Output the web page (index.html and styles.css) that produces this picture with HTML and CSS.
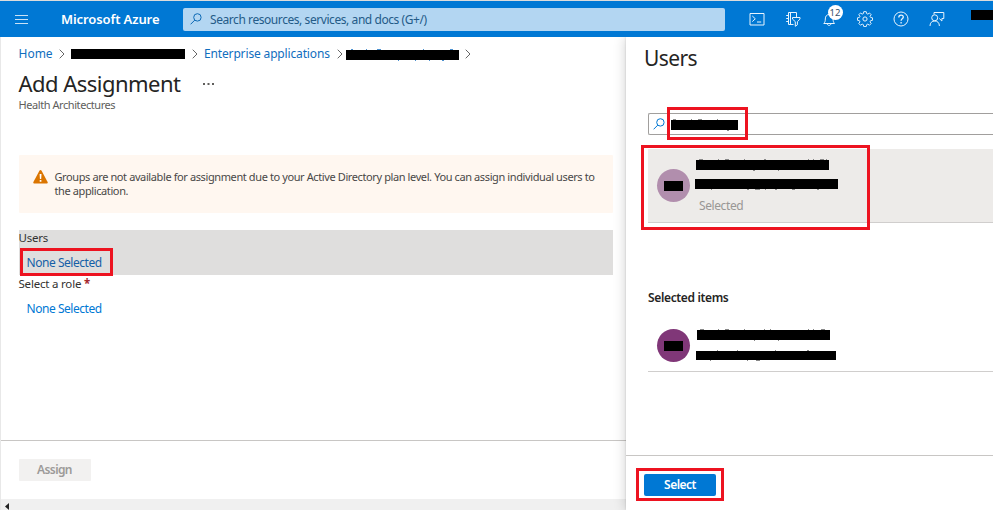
FILE: index.html
```html
<!DOCTYPE html>
<html lang="en">
<head>
<meta charset="utf-8">
<title>Add Assignment - Microsoft Azure</title>
<link rel="stylesheet" href="styles.css">
</head>
<body>
<header class="topbar">
  <svg class="menu" width="13" height="11" viewBox="0 0 13 11"><path d="M0 1.5h13M0 5.5h13M0 9.5h13"/></svg>
  <span class="brand">Microsoft Azure</span>
  <div class="search">
    <svg class="lens" width="12" height="12" viewBox="0 0 12 12"><circle cx="7.4" cy="4.4" r="3.7"/><path d="M4.8 7.1L.6 11.3"/></svg>
    <span>Search resources, services, and docs (G+/)</span>
  </div>
  <nav class="tools">
    <svg width="16" height="16" viewBox="0 0 16 16"><path d="M1 2.500h14v11.500H1zM3.300 5l3 2.800-3 2.800M8 11h4.200"/></svg>
    <svg width="16" height="16" viewBox="0 0 16 16"><path d="M11.500 6V1.500h-8v12H8.500M5.500 1.500v12M1.200 4.500h2.300M1.200 7.500h2.300M1.200 10.500h2.300M7.500 6.500h7.500v1.600l-2.600 2.600v3.100l-2.100 1.500v-4.600L7.500 8.100z"/></svg>
    <span class="bell">
      <svg width="16" height="16" viewBox="0 0 16 16"><path d="M2.800 12.500h10.700c-1-1.200-1.400-2.200-1.400-4.500 0-2.700-1.400-4.500-3.900-4.500S4.300 5.300 4.300 8c0 2.300-.4 3.300-1.500 4.500zM6.200 12.700c.2 2.300 3.500 2.300 3.700 0"/></svg>
      <b class="count">12</b>
    </span>
    <svg width="16" height="16" viewBox="0 0 16 16"><path d="M6.700 1h2.600l.4 2 1.300.6 1.700-1.200 1.800 1.800-1.200 1.700.6 1.200 2 .4v2.600l-2 .4-.6 1.300 1.200 1.700-1.800 1.800-1.700-1.200-1.300.6-.4 2H6.700l-.4-2-1.300-.6-1.700 1.200-1.800-1.800 1.200-1.700-.6-1.300-2-.4V7.500l2-.4.6-1.200-1.200-1.700 1.800-1.800L5 3.600 6.300 3z" transform="translate(.4 -.3) scale(.95)"/><circle cx="8" cy="8" r="2.100"/></svg>
    <svg width="16" height="16" viewBox="0 0 16 16"><circle cx="8" cy="8" r="7"/><path class="thick" d="M5.800 6.400C5.800 3.300 10.300 3.400 10.300 6.100c0 1.700-2.200 1.800-2.200 3.600M8.100 11v1.400"/></svg>
    <svg width="16" height="16" viewBox="0 0 16 16"><path d="M5 3.500V1.500h9.800v6h-1.900v2.500l-2.600-2.500M1 15c0-3.300 2-5 4.700-5s4.700 1.700 4.700 5"/><circle cx="5.700" cy="6.800" r="3"/></svg>
  </nav>
  <i class="mask account"></i>
</header>
<div class="workspace">
  <main class="blade">
    <div class="blade-body">
      <nav class="crumbs">
        <a class="home">Home</a>
        <svg class="chev" width="6" height="10" viewBox="0 0 6 10"><path d="M.7.700L5 5 .7 9.300"/></svg>
        <i class="mask crumb-a"></i>
        <svg class="chev" width="6" height="10" viewBox="0 0 6 10"><path d="M.7.700L5 5 .7 9.300"/></svg>
        <a class="apps">Enterprise applications</a>
        <svg class="chev last" width="6" height="10" viewBox="0 0 6 10"><path d="M.7.700L5 5 .7 9.300"/></svg>
        <i class="mask crumb-b"><svg class="specks link" width="113" height="12" viewBox="0 0 113 12"><path d="M5 .500h2M20 .500h1M31 .500h4M77 .500h1M104 .500h3M52 11.500h1M69 11.500h1M83 11.500h1M96 11.500h2"/></svg></i>
        <svg class="chev" width="6" height="10" viewBox="0 0 6 10"><path d="M.7.700L5 5 .7 9.300"/></svg>
      </nav>
      <div class="heading"><h1>Add Assignment</h1><svg width="11" height="2" viewBox="0 0 11 2"><path d="M0 0h2v2H0zM4.500 0h2v2h-2zM9 0h2v2H9z"/></svg></div>
      <p class="tenant">Health Architectures</p>
      <div class="notice">
        <svg width="15" height="14" viewBox="0 0 15 14"><path fill="#db7500" d="M6.400.8q1.100-1.400 2.200 0l6 11.200q.5 1.300-.8 1.500H1.200Q-.1 13.300.4 12z"/><path fill="#fff" d="M6.600 4h1.900l-.3 5H6.900zM6.700 10h1.700v1.700H6.700z"/></svg>
        <p>Groups are not available for assignment due to your Active Directory plan level. You can assign individual users to<br>the application.</p>
      </div>
      <section class="field active"><label>Users</label><a>None Selected</a><i class="outline pick"></i></section>
      <section class="field"><label>Select a role <em>*</em></label><a>None Selected</a></section>
    </div>
    <div class="blade-foot"><button class="assign" disabled>Assign</button></div>
    <div class="scroll"><svg width="4" height="7" viewBox="0 0 4 7"><path d="M4 0v7L0 3.500z"/></svg></div>
  </main>
  <aside class="panel">
    <div class="panel-body">
      <h2>Users</h2>
      <div class="filter">
        <svg class="lens" width="12" height="12" viewBox="0 0 12 12"><circle cx="7.400" cy="4.400" r="3.700"/><path d="M4.800 7.100L.6 11.300"/></svg>
        <i class="mask query"><svg class="specks" width="67" height="12" viewBox="0 0 67 12"><path d="M2 .500h3M20 .500h1M27 .500h4M46 .500h1M56 11.500h2"/></svg></i>
        <i class="outline around-query"></i>
      </div>
      <div class="person result">
        <span class="avatar"><i class="mask initials"></i></span>
        <div class="lines"><i class="mask name"><svg class="specks" width="133" height="12" viewBox="0 0 133 12"><path d="M3 .500h4M22 .500h1M29 .500h4M48 .500h1M68 .500h2M112 .500h1M117 .500h1M124 .500h4M130 .500h1M57 11.500h2M82 11.500h1"/></svg></i><i class="mask mail"><svg class="specks" width="144" height="12" viewBox="0 0 144 12"><path d="M16 11.500h1M52 11.500h2M60 11.500h5M70 11.500h1M80 11.500h2M97 11.500h3M122 11.500h2"/></svg></i><span class="state">Selected</span></div>
        <i class="outline around-result"></i>
      </div>
      <h3>Selected items</h3>
      <div class="person chosen">
        <span class="avatar"><i class="mask initials"></i></span>
        <div class="lines"><i class="mask name"><svg class="specks" width="133" height="12" viewBox="0 0 133 12"><path d="M3 .500h4M21 .500h1M28 .500h4M47 .500h1M67 .500h1M73 .500h1M111 .500h1M116 .500h1M124 .500h4M57 11.500h1M81 11.500h1"/></svg></i><i class="mask mail"><svg class="specks" width="140" height="11" viewBox="0 0 140 11"><path d="M21 .500h1M41 .500h1M79 .500h1M111 .500h2M14 10.500h1M51 10.500h1M60 10.500h4"/></svg></i></div>
      </div>
    </div>
    <div class="panel-foot"><button class="select">Select</button><i class="outline around-select"></i></div>
  </aside>
</div>
</body>
</html>
```

FILE: styles.css
```css
* { box-sizing: border-box; }
body {
  margin: 0;
  width: 993px;
  height: 510px;
  display: flex;
  flex-direction: column;
  overflow: hidden;
  background: #fff;
  color: #323130;
  font: 12px/16px "Noto Sans", "Open Sans", sans-serif;
}
h1, h2, h3, p { margin: 0; font-weight: 400; }
svg { display: block; flex: none; fill: none; }
button { border: 0; padding: 0; font: inherit; }
.mask { position: relative; display: block; flex: none; background: #000; height: 10px; }
.specks { position: absolute; left: 0; top: -1px; stroke: #888; stroke-width: 1; }
.specks.link { stroke: #4a90d0; }

.topbar {
  height: 37px;
  flex: none;
  display: flex;
  align-items: center;
  padding-left: 15px;
  border-top: 1px solid #dcdcdc;
  background: #0078d4;
  color: #fff;
}
.menu { stroke: #c9e2f6; stroke-width: 1; }
.brand { width: 155px; padding-left: 33px; white-space: nowrap; font-size: 13px; font-weight: 600; letter-spacing: -.1px; }
.search {
  width: 542px;
  height: 23px;
  display: flex;
  align-items: center;
  gap: 8px;
  padding-left: 7px;
  border-radius: 2px;
  background: #b3d6f2;
  color: #245b88;
  white-space: nowrap;
  letter-spacing: -.43px;
}
.search span { margin-top: 1px; }
.lens { stroke: #0c69b5; stroke-width: 1; }
.tools { display: flex; gap: 20px; margin-left: 23.5px; }
.tools svg { stroke: #e9f4fd; stroke-width: 1; }
.tools .thick { stroke-width: 1.3; }
.bell { position: relative; }
.count {
  position: absolute;
  left: 7px;
  top: -6px;
  width: 15px;
  height: 15px;
  border-radius: 50%;
  background: #fff;
  color: #38536c;
  font-size: 9.5px;
  line-height: 15px;
  font-weight: 400;
  text-align: center;
}
.account { width: 22px; margin: -9px 0 0 26.5px; }

.workspace { flex: 1; min-height: 0; display: grid; grid-template-columns: 626px 367px; }
.blade { display: flex; flex-direction: column; min-height: 0; border-left: 1px solid #e8e8e8; }
.blade-body { height: 403px; padding: 8px 13px 0 17.5px; }
.crumbs { height: 18px; display: flex; align-items: center; color: #106ebe; white-space: nowrap; }
.crumbs .home { width: 40.5px; }
.crumbs .apps { width: 133px; margin-left: 6px; letter-spacing: -.15px; }
.chev { stroke: #666; stroke-width: 1; }
.crumb-a { width: 114px; margin: -1px 7px 0 6px; }
.crumb-b { width: 113px; margin: 2px 6px 0 3px; }
.heading { height: 32px; margin-top: 5px; display: flex; align-items: center; gap: 22px; }
.heading h1 { width: 162px; margin-top: -2px; font-size: 22px; line-height: 32px; white-space: nowrap; letter-spacing: -.53px; color: #252423; }
.heading svg { fill: #605e5c; }
.tenant { width: 110px; margin-top: -3px; font-size: 11px; line-height: 16px; color: #605e5c; letter-spacing: -.43px; }
.notice { height: 58px; margin: 42px 0 17px; padding: 15px 15px 15px 14px; display: flex; gap: 7px; background: #fff7f0; border-radius: 1px; }
.notice p { font-size: 11px; line-height: 14px; white-space: nowrap; color: #494847; letter-spacing: -.392px; }
.field { position: relative; height: 45px; display: flex; flex-direction: column; }
.field label { height: 17px; line-height: 16px; font-size: 11.5px; letter-spacing: -.2px; }
.field a { height: 28px; line-height: 32px; padding-left: 8px; color: #0078d4; letter-spacing: -.46px; }
.field em { color: #a4262c; font-style: normal; font-weight: 700; }
.field.active { background: #dfdedd; margin-bottom: 1px; }
.field.active a { color: #155fa7; }
.blade-foot { flex: 1; padding: 18px 0 0 17.5px; border-top: 1px solid #c8c6c4; }
.assign { display: block; width: 72px; height: 22px; border-radius: 1px; background: #f2f1f0; color: #9c9a98; font-weight: 600; letter-spacing: -.6px; }
.scroll { height: 11px; background: #f0f0f0; padding: 4px 0 0 4px; }
.scroll svg { fill: #222; }

.outline { position: absolute; border: 3px solid #ed1320; z-index: 2; }
.pick { left: 1.5px; top: 18px; width: 93px; height: 28px; }
.panel { display: flex; flex-direction: column; background: #fff; box-shadow: 0 0 12px rgba(0, 0, 0, .2), 0 0 2px rgba(0, 0, 0, .15); clip-path: inset(0 0 0 -20px); }
.panel-body { height: 418px; padding-left: 22px; }
.panel h2 { margin: 5px 0 0 -4px; height: 32px; line-height: 33px; font-size: 21px; color: #252423; letter-spacing: -.6px; }
.filter { position: relative; height: 22px; margin-top: 39px; display: flex; align-items: center; padding-left: 4px; border: 1px solid #a19f9d; border-right: 0; border-radius: 2px 0 0 2px; }
.filter .lens { stroke: #0078d4; }
.query { width: 67px; margin: 2px 0 0 6px; }
.around-query { left: 18px; top: -7px; width: 81px; height: 33px; }
.person { position: relative; display: flex; padding-left: 9px; }
.avatar { width: 33px; height: 33px; flex: none; border-radius: 50%; background: #803778; display: grid; place-items: center; }
.initials { width: 19px; margin: 1px 1px 0 0; }
.result { height: 74px; margin-top: 14px; padding-top: 20px; background: #edebe9; border-bottom: 1px solid #d0cecd; }
.result .avatar { background: #b18ead; }
.lines { margin-left: 7px; }
.result .lines { margin-top: -9px; margin-left: 5px; }
.result .name { width: 133px; margin-left: 1px; }
.result .mail { width: 143px; margin-top: 9px; }
.state { display: block; margin: 9px 0 0 4px; line-height: 16px; color: #999795; letter-spacing: -.4px; }
.around-result { left: -7px; top: -4px; width: 229px; height: 85px; }
.panel h3 { margin-top: 66px; height: 18px; line-height: 18px; font-size: 12px; font-weight: 600; color: #252423; letter-spacing: -.35px; }
.chosen { height: 65px; padding-top: 22px; border-bottom: 1px solid #d0cecd; }
.chosen .name { width: 133px; margin-top: 1px; }
.chosen .mail { width: 140px; margin: 11px 0 0 -1px; height: 9px; }
.panel-foot { position: relative; flex: 1; padding: 18px 0 0 18px; border-top: 1px solid #c8c6c4; }
.select { display: block; width: 72px; height: 22px; border-radius: 2px; background: #0078d4; color: #fff; font-weight: 600; letter-spacing: -.5px; }
.around-select { left: 10px; top: 12px; width: 88px; height: 33px; }
```
